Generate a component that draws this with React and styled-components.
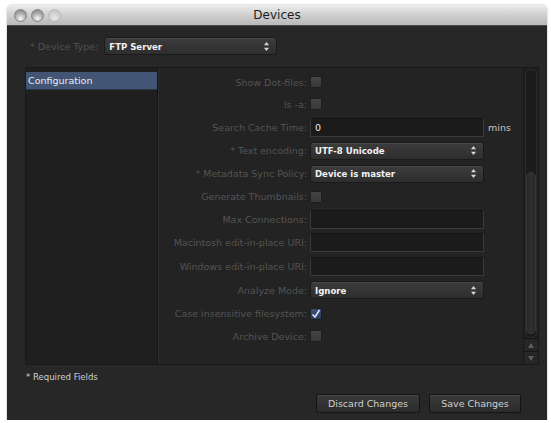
import React from "react";
import styled, { createGlobalStyle } from "styled-components";

const Global = createGlobalStyle`
  html, body { margin: 0; padding: 0; background: #ffffff; }
  body { font-family: "Lucida Grande", "DejaVu Sans", sans-serif; }
`;

const Window = styled.div`
  margin: 5px 0 0 7px;
  width: 540px;
  height: 415px;
  display: flex;
  flex-direction: column;
  border-radius: 5px 5px 0 0;
  overflow: hidden;
  box-shadow: 0 0 2px rgba(0,0,0,0.35);
`;

const TitleBar = styled.div`
  height: 20px;
  flex: none;
  display: flex;
  align-items: center;
  position: relative;
  background: linear-gradient(#ececec, #cfcfcf 50%, #b9b9b9);
  border-bottom: 1px solid #4a4a4a;
`;

const Lights = styled.div`
  display: flex;
  gap: 4px;
  padding-left: 7px;
`;

const Light = styled.span`
  width: 13px;
  height: 13px;
  border-radius: 50%;
  box-sizing: border-box;
  border: 1px solid ${p => (p.$dim ? "#b9b9b9" : "#858585")};
  background: ${p =>
    p.$dim
      ? "radial-gradient(circle at 50% 75%, #e6e6e6, #cacaca 70%)"
      : "radial-gradient(circle at 50% 78%, #f6f6f6, #b0b0b0 50%, #7a7a7a)"};
`;

const Title = styled.div`
  position: absolute;
  left: 0;
  right: 0;
  text-align: center;
  font-size: 12px;
  color: #1c1c1c;
  pointer-events: none;
`;

const Body = styled.div`
  flex: 1;
  background: #272727;
  display: flex;
  flex-direction: column;
  padding: 10px 8px 0 18px;
`;

const TopRow = styled.div`
  display: flex;
  align-items: center;
  gap: 6px;
  padding-left: 5px;
  height: 20px;
`;

const DimLabel = styled.span`
  font-size: 9.5px;
  color: #525252;
  white-space: nowrap;
`;

const Select = styled.div`
  width: ${p => p.$w}px;
  height: 18px;
  box-sizing: border-box;
  display: flex;
  align-items: center;
  justify-content: space-between;
  padding: 0 7px 0 4px;
  border-radius: 3px;
  border: 1px solid #1a1a1a;
  background: linear-gradient(#3c3c3c, #2e2e2e);
  box-shadow: inset 0 1px 0 rgba(255,255,255,0.07);
  color: #f2f2f2;
  font-family: "DejaVu Sans Condensed", "DejaVu Sans", sans-serif;
  font-size: 9.5px;
  font-weight: bold;
`;

const Arrows = () => (
  <svg width="5" height="9" viewBox="0 0 5 9">
    <path d="M2.5 0 L5 3.3 L0 3.3 Z" fill="#d8d8d8" />
    <path d="M2.5 9 L5 5.7 L0 5.7 Z" fill="#d8d8d8" />
  </svg>
);

const Panel = styled.div`
  margin-top: 11px;
  width: 514px;
  height: 298px;
  box-sizing: border-box;
  display: flex;
  border: 1px solid #191919;
  background: #232323;
`;

const List = styled.div`
  width: 131px;
  flex: none;
  background: #1f1f1f;
  border-right: 1px solid #141414;
  box-shadow: 1px 0 0 #2e2e2e;
  padding-top: 4px;
`;

const ListItem = styled.div`
  height: 17px;
  display: flex;
  align-items: center;
  padding-left: 2px;
  font-size: 9.5px;
  color: #e8ecf2;
  background: ${p => (p.$selected ? "#435574" : "transparent")};
  border-bottom: ${p => (p.$selected ? "1px solid #2a3548" : "none")};
`;

const Content = styled.div`
  flex: 1;
  padding-top: 3px;
  display: flex;
  flex-direction: column;
`;

const Row = styled.div`
  height: ${p => p.$h}px;
  display: grid;
  grid-template-columns: 149px auto auto;
  column-gap: 3px;
  align-items: center;
  justify-content: start;
`;

const Label = styled.span`
  text-align: right;
  font-size: 9.5px;
  color: #545454;
  white-space: nowrap;
`;

const Check = styled.span`
  width: 12px;
  height: 12px;
  box-sizing: border-box;
  border: 1px solid #1e1e1e;
  background: ${p => (p.$checked ? "linear-gradient(#3b5078, #2c3d5e)" : "linear-gradient(#454545, #383838)")};
  display: flex;
  align-items: center;
  justify-content: center;
`;

const Field = styled.div`
  width: 174px;
  height: 19px;
  box-sizing: border-box;
  border: 1px solid #393939;
  border-top-color: #141414;
  background: #1b1b1b;
  display: flex;
  align-items: center;
  padding-left: 4px;
  font-size: 9.5px;
  color: #e8e8e8;
`;

const Unit = styled.span`
  font-size: 9.5px;
  color: #c6c6c6;
  margin-left: 1px;
`;

const ScrollBar = styled.div`
  width: 14px;
  flex: none;
  display: flex;
  flex-direction: column;
  background: #1e1e1e;
  border-left: 1px solid #191919;
`;

const Track = styled.div`
  flex: 1;
  margin: 1px 1px 0;
  border-radius: 6px;
  background: #1b1b1b;
  border: 1px solid #2c2c2c;
  display: flex;
  flex-direction: column;
  justify-content: flex-end;
`;

const Thumb = styled.div`
  height: 160px;
  border-radius: 6px;
  background: linear-gradient(90deg, #262626, #303030, #262626);
  border: 1px solid #383838;
  margin-bottom: 3px;
`;

const ArrowBtn = styled.div`
  height: 12px;
  display: flex;
  align-items: center;
  justify-content: center;
  border-top: 1px solid #151515;
  background: #262626;
`;

const Required = styled.div`
  margin-top: 6px;
  font-family: "DejaVu Sans Condensed", "DejaVu Sans", sans-serif;
  font-size: 9.5px;
  color: #cfcfcf;
  padding-left: 1px;
`;

const Buttons = styled.div`
  margin-top: 12px;
  display: flex;
  justify-content: flex-end;
  gap: 9px;
  padding-right: 18px;
`;

const Button = styled.div`
  width: ${p => p.$w}px;
  height: 19px;
  box-sizing: border-box;
  border: 1px solid #141414;
  border-radius: 2px;
  background: linear-gradient(#3a3a3a, #2b2b2b);
  box-shadow: inset 0 1px 0 rgba(255,255,255,0.08);
  display: flex;
  align-items: center;
  justify-content: center;
  font-size: 9.5px;
  color: #d0d0d0;
`;

const Tick = () => (
  <svg width="10" height="10" viewBox="0 0 10 10">
    <path d="M1.5 5.5 L4 8 L8.5 1" stroke="#d8e4ff" strokeWidth="1.6" fill="none" />
  </svg>
);

const Tri = ({ up }) => (
  <svg width="6" height="5" viewBox="0 0 6 5">
    <path d={up ? "M3 0 L6 5 L0 5 Z" : "M3 5 L6 0 L0 0 Z"} fill="#5e5e5e" />
  </svg>
);

const rows = [
  { label: "Show Dot-files:", type: "check", h: 22 },
  { label: "ls -a:", type: "check", h: 22 },
  { label: "Search Cache Time:", type: "field", value: "0", unit: "mins", h: 24 },
  { label: "* Text encoding:", type: "select", value: "UTF-8 Unicode", h: 23 },
  { label: "* Metadata Sync Policy:", type: "select", value: "Device is master", h: 23 },
  { label: "Generate Thumbnails:", type: "check", h: 23 },
  { label: "Max Connections:", type: "field", value: "", h: 23 },
  { label: "Macintosh edit-in-place URI:", type: "field", value: "", h: 23 },
  { label: "Windows edit-in-place URI:", type: "field", value: "", h: 24 },
  { label: "Analyze Mode:", type: "select", value: "Ignore", h: 24 },
  { label: "Case insensitive filesystem:", type: "check", checked: true, h: 23 },
  { label: "Archive Device:", type: "check", h: 22 },
];

function Control({ r }) {
  if (r.type === "check") return <Check $checked={r.checked}>{r.checked && <Tick />}</Check>;
  if (r.type === "select")
    return (
      <Select $w={174}>
        <span>{r.value}</span>
        <Arrows />
      </Select>
    );
  return <Field>{r.value}</Field>;
}

export default function App() {
  return (
    <>
      <Global />
      <Window>
        <TitleBar>
          <Lights>
            <Light />
            <Light />
            <Light $dim />
          </Lights>
          <Title>Devices</Title>
        </TitleBar>
        <Body>
          <TopRow>
            <DimLabel>* Device Type:</DimLabel>
            <Select $w={173}>
              <span>FTP Server</span>
              <Arrows />
            </Select>
          </TopRow>
          <Panel>
            <List>
              <ListItem $selected>Configuration</ListItem>
            </List>
            <Content>
              {rows.map(r => (
                <Row key={r.label} $h={r.h}>
                  <Label>{r.label}</Label>
                  <Control r={r} />
                  {r.unit ? <Unit>{r.unit}</Unit> : <span />}
                </Row>
              ))}
            </Content>
            <ScrollBar>
              <Track>
                <Thumb />
              </Track>
              <ArrowBtn>
                <Tri up />
              </ArrowBtn>
              <ArrowBtn>
                <Tri />
              </ArrowBtn>
            </ScrollBar>
          </Panel>
          <Required>* Required Fields</Required>
          <Buttons>
            <Button $w={104}>Discard Changes</Button>
            <Button $w={92}>Save Changes</Button>
          </Buttons>
        </Body>
      </Window>
    </>
  );
}
